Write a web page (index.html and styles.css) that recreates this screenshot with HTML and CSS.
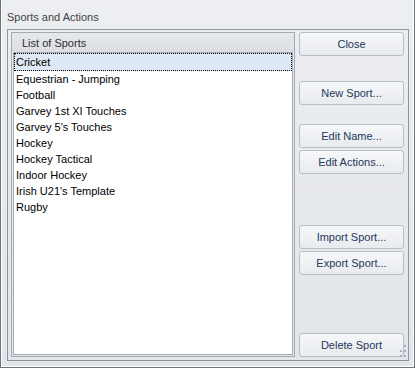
FILE: index.html
```html
<!DOCTYPE html>
<html lang="en">
<head>
  <meta charset="UTF-8" />
  <title>Sports and Actions</title>
  <link rel="stylesheet" href="styles.css">
</head>
<body>

  <div class="window">
    <!-- Caption -->
    <div class="caption">Sports and Actions</div>

    <!-- Group box -->
    <div class="group">
      <div class="list-panel">
        <div class="list-header">List of Sports</div>
        <ul class="list">
          <li class="selected">Cricket</li>
          <li>Equestrian - Jumping</li>
          <li>Football</li>
          <li>Garvey 1st XI Touches</li>
          <li>Garvey 5's Touches</li>
          <li>Hockey</li>
          <li>Hockey Tactical</li>
          <li>Indoor Hockey</li>
          <li>Irish U21's Template</li>
          <li>Rugby</li>
        </ul>
      </div>

      <div class="buttons">
        <button class="btn">Close</button>
        <button class="btn btn-new">New Sport...</button>
        <button class="btn btn-edit">Edit Name...</button>
        <button class="btn btn-pair">Edit Actions...</button>
        <button class="btn btn-import">Import Sport...</button>
        <button class="btn btn-pair">Export Sport...</button>
        <button class="btn btn-delete">Delete Sport</button>
      </div>
    </div>

    <!-- Resize grip -->
    <svg class="grip" width="8" height="12" viewBox="0 0 8 12">
      <rect x="6" y="0" width="2" height="2" fill="#a9aeb6" />
      <rect x="6" y="5" width="2" height="2" fill="#a9aeb6" />
      <rect x="2" y="5" width="2" height="2" fill="#a9aeb6" />
      <rect x="6" y="10" width="2" height="2" fill="#a9aeb6" />
      <rect x="2" y="10" width="2" height="2" fill="#a9aeb6" />
    </svg>
  </div>

</body>
</html>
```

FILE: styles.css
```css
/* General */
body {
  margin: 0;
  padding: 0;
  font-family: "Liberation Sans", Arial, sans-serif;
  font-size: 11px;
  background: #ffffff;
}

/* Window */
.window {
  position: relative;
  width: 415px;
  height: 368px;
  box-sizing: border-box;
  padding: 0 5px 6px 6px;
  border-left: 1px solid #6b737d;
  border-right: 1px solid #6b737d;
  border-bottom: 1px solid #6b737d;
  box-shadow: inset 1px 0 #ffffff, inset -1px 0 #ffffff, inset 0 -1px #ffffff;
  background: linear-gradient(#eceef1, #e2e5e9);
  display: flex;
  flex-direction: column;
}

.caption {
  height: 29px;
  box-sizing: border-box;
  padding-top: 11px;
  line-height: 13px;
  color: #444444;
}

/* Group box */
.group {
  flex: 1;
  display: flex;
  gap: 4px;
  padding: 2px 4px 3px 3px;
  border: 1px solid #8e949c;
}

/* List */
.list-panel {
  flex: 1;
  display: flex;
  flex-direction: column;
  border: 1px solid #a4a9b3;
}

.list-header {
  height: 19px;
  box-sizing: border-box;
  padding: 4px 0 0 10px;
  line-height: 13px;
  color: #2e2e2e;
  background: linear-gradient(#e6e8eb, #dcdfe3);
}

.list {
  flex: 1;
  list-style: none;
  margin: 0 1px 1px 1px;
  padding: 0;
  background: #ffffff;
  border: 1px solid #a4a9b3;
}

.list li {
  height: 16px;
  line-height: 16px;
  padding-left: 2px;
  color: #000000;
}

.list li.selected {
  height: 18px;
  line-height: 16px;
  box-sizing: border-box;
  padding-left: 1px;
  background: #dfe9f5;
  border: 1px dotted #000000;
}

/* Buttons */
.buttons {
  width: 105px;
  display: flex;
  flex-direction: column;
}

.btn {
  height: 24px;
  padding: 0;
  font-family: inherit;
  font-size: 11px;
  color: #1e395b;
  border: 1px solid #b9bec6;
  border-radius: 3px;
  background: linear-gradient(#f6f7f9, #e8ebef);
}

.btn-new {
  margin-top: 25px;
}

.btn-edit {
  margin-top: 19px;
}

.btn-pair {
  margin-top: 2px;
}

.btn-import {
  margin-top: 51px;
}

.btn-delete {
  margin-top: auto;
}

/* Resize grip */
.grip {
  position: absolute;
  right: 8px;
  bottom: 10px;
}
```
